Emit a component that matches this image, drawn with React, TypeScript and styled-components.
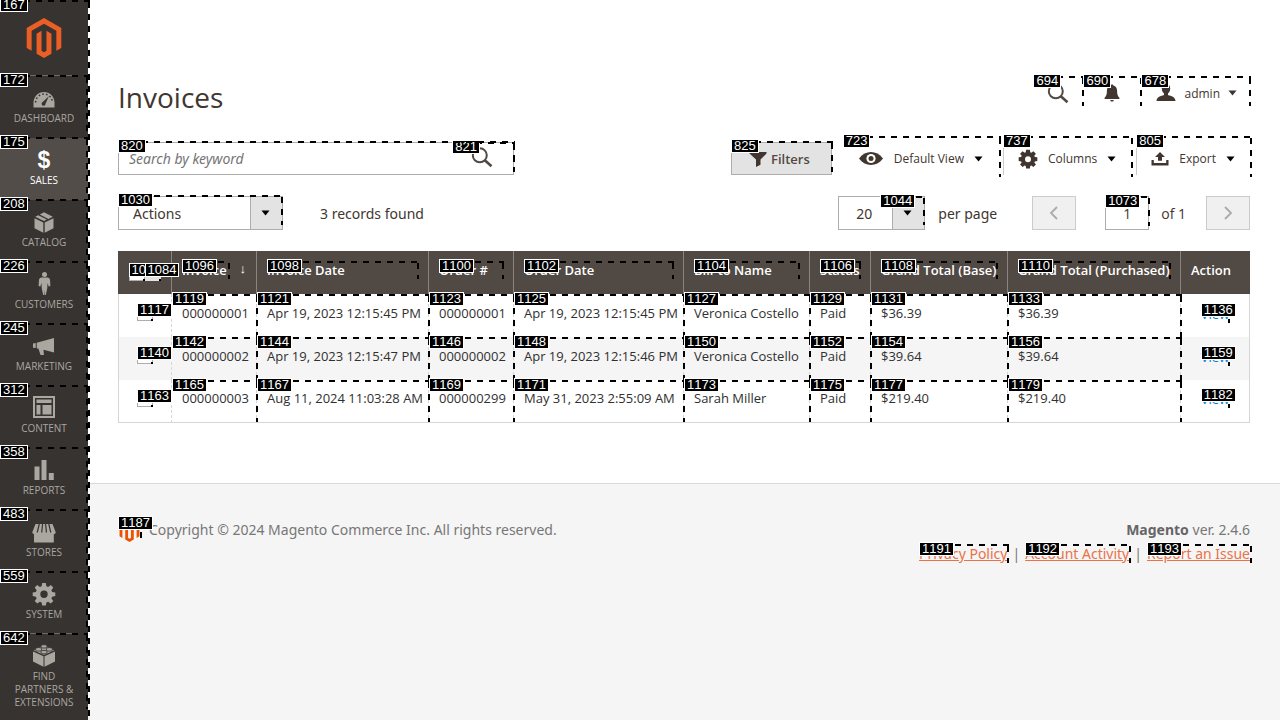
import React from 'react';
import styled, { createGlobalStyle, css } from 'styled-components';

const GlobalStyle = createGlobalStyle`
  *, *::before, *::after { box-sizing: border-box; }
  body {
    margin: 0;
    background: #fff;
    color: #41362f;
    font-family: 'Open Sans', 'Liberation Sans', sans-serif;
    font-size: 14px;
  }
  button, input, select { font: inherit; color: inherit; margin: 0; }
`;

const textFont = "'Noto Sans', 'Open Sans', sans-serif";

/* ---------- numbered element markers ---------- */

const MarkBox = styled.span<{ $t: number; $r: number; $b: number; $l: number }>`
  position: absolute;
  top: ${p => p.$t}px;
  right: ${p => p.$r}px;
  bottom: ${p => p.$b}px;
  left: ${p => p.$l}px;
  z-index: 2;
  pointer-events: none;
  background:
    repeating-linear-gradient(to right, #000 0 6px, transparent 6px 12px) top left / 100% 2px no-repeat,
    repeating-linear-gradient(to bottom, transparent 0 2px, #000 2px 8px, transparent 8px 12px) top right / 2px 100% no-repeat;
`;

const MarkTag = styled.span`
  position: absolute;
  top: -2px;
  left: 0;
  height: 14px;
  padding: 0 2px;
  border: 1px solid #fff;
  background: #000;
  color: #fff;
  font: normal 400 13px/12px 'Liberation Sans', Arial, sans-serif;
  font-kerning: none;
  text-transform: none;
  white-space: nowrap;
`;

type MarkProps = { id: number; t?: number; r?: number; b?: number; l?: number };

const Mark = ({ id, t = 0, r = 0, b = 0, l = 0 }: MarkProps) => (
  <MarkBox $t={t} $r={r} $b={b} $l={l} aria-hidden="true">
    <MarkTag>{id}</MarkTag>
  </MarkBox>
);

/* ---------- shell ---------- */

const Shell = styled.div`
  display: flex;
  min-height: 100vh;
`;

const Sidebar = styled.nav`
  position: relative;
  flex: 0 0 88px;
  background: #373330;
`;

const LogoLink = styled.a`
  display: flex;
  align-items: center;
  justify-content: center;
  height: 76px;
  color: #eb5f26;
`;

const MenuList = styled.ul`
  margin: 0;
  padding: 0;
  list-style: none;
`;

const MenuItem = styled.li<{ $active?: boolean; $ruled?: boolean }>`
  position: relative;
  background: ${p => (p.$active ? '#524d49' : 'transparent')};
  color: ${p => (p.$active ? '#fff' : '#aaa6a0')};
  ${p => p.$ruled && css`
    &::before {
      content: '';
      position: absolute;
      top: -1px;
      left: 16px;
      right: 16px;
      border-top: 1px solid #736963;
    }
  `}
`;

const MenuLink = styled.a`
  display: flex;
  flex-direction: column;
  align-items: center;
  gap: 2px;
  min-height: 62px;
  padding: 10px 8px 0;
  color: inherit;
  font-size: 10px;
  line-height: 13px;
  text-align: center;
  text-decoration: none;
  text-transform: uppercase;
`;

const DollarSign = styled.span`
  height: 24px;
  font: 700 23px/24px 'Liberation Sans', Arial, sans-serif;
`;

const Page = styled.div`
  display: flex;
  flex: 1;
  flex-direction: column;
  min-width: 0;
`;

const Main = styled.main`
  display: flex;
  flex-direction: column;
  gap: 21px;
  padding: 76px 30px 60px;
`;

const PageHeader = styled.header`
  display: flex;
  align-items: flex-start;
  justify-content: space-between;
`;

const Title = styled.h1`
  margin: 0;
  padding-bottom: 3px;
  font-size: 28px;
  font-weight: 400;
  line-height: 42px;
`;

const HeaderActions = styled.div`
  display: flex;
`;

const HeaderButton = styled.button`
  position: relative;
  display: flex;
  align-items: center;
  gap: 8px;
  height: 34px;
  padding: 0 14px;
  border: 0;
  background: none;
  font-size: 12px;
`;

const BellButton = styled(HeaderButton)`
  padding: 0 20px;
`;

const UserButton = styled(HeaderButton)`
  padding: 0 13px 0 15px;
`;

/* ---------- toolbar ---------- */

const Row = styled.div`
  display: flex;
  align-items: center;
  justify-content: space-between;
`;

const Group = styled.div`
  display: flex;
  align-items: center;
`;

const SearchBox = styled.form`
  position: relative;
  display: flex;
  flex: 0 0 35%;
  height: 33px;
  border: 1px solid #adadad;
`;

const SearchInput = styled.input`
  flex: 1;
  min-width: 0;
  padding: 0 10px;
  border: 0;
  background: none;
  &::placeholder { color: #757575; font-family: ${textFont}; font-style: italic; opacity: 1; }
`;

const SearchButton = styled.button`
  position: relative;
  width: 61px;
  padding: 0 0 0 19px;
  border: 0;
  background: none;
  text-align: left;
`;

const FiltersButton = styled.button`
  position: relative;
  display: flex;
  align-items: center;
  gap: 4px;
  height: 33px;
  margin-right: 11px;
  padding: 0 21px 0 17px;
  border: 1px solid #adadad;
  background: #e3e3e3;
  color: #514943;
  font-size: 13px;
  font-weight: 600;
`;

const ToolButton = styled.button<{ $divided?: boolean }>`
  position: relative;
  display: flex;
  align-items: center;
  gap: 10px;
  height: 33px;
  padding: 0 20px 0 14px;
  border: 0;
  border-left: 1px solid ${p => (p.$divided ? '#ccc' : 'transparent')};
  background: none;
  font-size: 12px;
  &:last-child { padding-right: 15px; }
`;

const SelectBox = styled.div<{ $width: number }>`
  position: relative;
  display: flex;
  width: ${p => p.$width}px;
  height: 34px;
  border: 1px solid #adadad;
`;

const Select = styled.select<{ $pad: number }>`
  flex: 1;
  width: 100%;
  padding: 0 32px 0 ${p => p.$pad}px;
  border: 0;
  border-radius: 0;
  background: linear-gradient(to right, #adadad 1px, #e3e3e3 1px) right / 32px 100% no-repeat;
  font-family: ${textFont};
  appearance: none;
`;

const SelectCaret = styled.span`
  position: absolute;
  top: 0;
  right: 12px;
  bottom: 0;
  display: flex;
  align-items: center;
  pointer-events: none;
`;

const RecordCount = styled.p`
  margin: 0 0 0 37px;
  font-family: ${textFont};
`;

const PerPage = styled.label`
  margin: 0 35px 0 13px;
  font-family: ${textFont};
`;

const PageButton = styled.button`
  display: flex;
  align-items: center;
  justify-content: center;
  width: 44px;
  height: 34px;
  padding: 0;
  border: 1px solid #ccc;
  background: #f0f0f0;
  color: #aaa;
`;

const PageField = styled.div`
  position: relative;
  margin: 0 12px 0 29px;
`;

const PageInput = styled.input`
  display: block;
  width: 44px;
  height: 34px;
  padding: 0;
  border: 1px solid #adadad;
  text-align: center;
`;

const PageTotal = styled.label`
  margin-right: 20px;
`;

/* ---------- grid ---------- */

const Grid = styled.table`
  width: 100%;
  border-collapse: separate;
  border-spacing: 0;
  table-layout: fixed;
  font-size: 13px;
  line-height: 18px;
`;

const HeadCell = styled.th`
  height: 43px;
  padding: 0 10px 5px;
  border-right: 1px solid #8a837f;
  background: #514943;
  color: #fff;
  font-weight: 600;
  text-align: left;
  white-space: nowrap;
  &:last-child { border-right-color: #514943; }
`;

const HeadInner = styled.div`
  display: flex;
  justify-content: space-between;
`;

const HeadLabel = styled.span`
  position: relative;
  flex: 1;
`;

const SortArrow = styled.span`
  width: 17px;
  font-weight: 400;
  line-height: 14px;
  text-align: right;
`;

const BodyRow = styled.tr`
  &:nth-child(even) { background: #f5f5f5; }
  &:last-child td { border-bottom: 1px solid #d6d6d6; }
`;

const Cell = styled.td`
  position: relative;
  height: 43px;
  padding: 0 10px 6px;
  border-right: 1px dashed #d6d6d6;
  color: #303030;
  white-space: nowrap;
  &:first-child { border-left: 1px solid #d6d6d6; }
  &:last-child { border-right: 1px solid #d6d6d6; }
`;

const CheckCell = styled(Cell)`
  padding: 0 0 5px;
`;

const ActionCell = styled(Cell)`
  padding: 0 10px 4px;
  text-align: center;
`;

const ViewLink = styled.a`
  position: relative;
  color: #007bdb;
  display: inline-block;
  text-decoration: none;
`;

const CheckWrap = styled.label`
  position: relative;
  display: block;
  width: 16px;
  height: 16px;
  margin: 0 auto;
`;

const Checkbox = styled.input`
  display: block;
  width: 16px;
  height: 16px;
  margin: 0;
  border: 1px solid #adadad;
  background: #fff;
  appearance: none;
`;

const MultiCheck = styled.div`
  display: flex;
  justify-content: center;
  margin-top: 5px;
`;

const MultiToggle = styled.button`
  position: relative;
  width: 16px;
  height: 16px;
  padding: 0;
  border: 0;
  background: #e3e3e3;
`;

const MultiLabel = styled.label`
  position: relative;
  width: 16px;
  height: 16px;
`;

/* ---------- footer ---------- */

const Footer = styled.footer`
  display: flex;
  flex: 1;
  align-items: flex-start;
  justify-content: space-between;
  padding: 34px 30px 0;
  border-top: 1px solid #d9d9d9;
  background: #f5f5f5;
  color: #777;
  font-family: ${textFont};
  line-height: 24px;
`;

const Copyright = styled.p`
  display: flex;
  gap: 7px;
  margin: 0;
`;

const FooterLogo = styled.a`
  position: relative;
  display: flex;
  align-items: center;
  justify-content: flex-start;
  width: 24px;
  height: 24px;
  color: #eb5202;
`;

const FooterInfo = styled.div`
  text-align: right;
`;

const Version = styled.p`
  margin: 0;
  strong { color: #666; font-weight: 700; }
`;

const FooterLink = styled.a`
  position: relative;
  color: #ea7248;
`;

const Divider = styled.span`
  margin: 0 5px;
`;

/* ---------- icons ---------- */

const MagentoLogo = ({ size }: { size: number }) => (
  <svg width={size} height={size} viewBox="0 0 24 24" fill="currentColor" aria-hidden="true">
    <path d="M12 24l-4.455-2.572v-12l2.97-1.715v12.001l1.485.902 1.485-.902V7.713l2.971 1.715v12L12 24zM22.391 6v12l-2.969 1.714V7.713L12 3.43 4.574 7.713v12.001L1.609 18V6L12 0l10.391 6z" />
  </svg>
);

const MenuSvg = ({ children }: { children: React.ReactNode }) => (
  <svg width="24" height="24" viewBox="0 0 24 24" fill="currentColor" aria-hidden="true">{children}</svg>
);

const dark = '#373330';

const menuIcons: Record<string, React.ReactNode> = {
  dashboard: (
    <MenuSvg>
      <path d="M1.5 21.5v-5C1.5 10.700 6.200 6 12 6s10.500 4.700 10.500 10.500v5z" />
      <path d="M16.800 10.300l-3.200 7.200a2 2 0 1 1-2.600-1.700z" fill={dark} />
      <path d="M3.600 16.500a8.400 8.400 0 0 1 16.800 0" fill="none" stroke={dark} strokeWidth="1.500" strokeDasharray="1.600 2.180" />
    </MenuSvg>
  ),
  catalog: (
    <MenuSvg>
      <path d="M2.500 8.200l8.800 4.300v10.200l-8.800-4.500zM21.500 8.200l-8.800 4.300v10.200l8.800-4.500zM3.200 6.800l3-1.500 8.600 4.300-2.800 1.400zM7.800 4.500L12 2.300l8.800 4.500-4.400 2.100z" />
    </MenuSvg>
  ),
  customers: (
    <MenuSvg>
      <circle cx="12.500" cy="2.500" r="2.500" />
      <path d="M9.500 5.500h6c1.300 0 2.300 1 2.500 2.300l.4 6-1.600.9-1.200-3.600-.4 5.400-1.400 6.500h-1l-.3-5.300-.3 5.300h-1l-1.400-6.500-.4-5.400-1.200 3.600-1.600-.9.4-6C7.200 6.500 8.200 5.500 9.500 5.500z" />
    </MenuSvg>
  ),
  marketing: (
    <MenuSvg>
      <path d="M1 9.500l2.700-.4v5L1 13.700zM4.700 8.700L22 4v14.500l-10.500-2.800.4 5.300H8.500l-2-6.300-1.800-.4z" />
    </MenuSvg>
  ),
  content: (
    <MenuSvg>
      <path d="M1 0h22v22H1zM3 2v18h18V2z" fillRule="evenodd" />
      <path d="M4.500 3.500h15V7h-15zM4.500 9h4v9.500h-4zM10.500 9h9v9.500h-9z" />
    </MenuSvg>
  ),
  reports: (
    <MenuSvg><path d="M2.500 8.500h5v13.500h-5zM9.500 2h5v20h-5zM16.800 15h5v7h-5z" /></MenuSvg>
  ),
  stores: (
    <MenuSvg>
      <path d="M3.500 4h17l3.300 8.500a2.700 2.700 0 0 1-2 1.700V22.500H2v-8.300a2.700 2.700 0 0 1-1.800-1.700z" />
      <path d="M7.300 4L5.200 12.500M10.600 4l-.9 8.500M13.600 4l.8 8.500M16.800 4l2 8.500" fill="none" stroke={dark} strokeWidth="1.200" />
    </MenuSvg>
  ),
  system: (
    <MenuSvg>
      <path fillRule="evenodd" d="M10.200 1h3.600l.6 3.200 1.700.7 2.700-1.900 2.500 2.500-1.900 2.700.7 1.700 3.200.6v3.600l-3.200.6-.7 1.700 1.900 2.700-2.500 2.500-2.700-1.900-1.700.7-.6 3.200h-3.600l-.6-3.200-1.700-.7-2.700 1.900-2.500-2.500 1.900-2.700-.7-1.700-3.200-.6v-3.600l3.200-.6.7-1.700-1.900-2.700 2.500-2.500 2.700 1.900 1.700-.7zM12 8.600a3.700 3.700 0 1 0 0 7.400 3.700 3.700 0 0 0 0-7.400z" />
    </MenuSvg>
  ),
  partners: (
    <MenuSvg>
      <path d="M1 7.500l10.500 4.700v10.500L1 17.600zM23 7.500l-10.500 4.700v10.500L23 17.600zM1.800 6.300L12 1.800l10.200 4.500L12 11z" />
      <g fill="currentColor" stroke={dark} strokeWidth="0.900">
        <path d="M9 3v-1.200c0-1.400 6-1.400 6 0V3c0 1.400-6 1.400-6 0zM3.600 6V4.700c0-1.400 6-1.400 6 0V6c0 1.400-6 1.400-6 0zM14.400 6V4.700c0-1.400 6-1.400 6 0V6c0 1.400-6 1.400-6 0zM9 8.800V7.500c0-1.400 6-1.400 6 0v1.300c0 1.400-6 1.400-6 0z" />
      </g>
    </MenuSvg>
  ),
};

const Caret = () => (
  <svg width="9" height="6" viewBox="0 0 9 6" fill="currentColor" aria-hidden="true"><path d="M0.500 0.500h8L4.500 5.500z" /></svg>
);

const BlackCaret = styled.span`
  display: flex;
  color: #000;
`;

const SearchIcon = () => (
  <svg width="22" height="22" viewBox="0 0 22 22" fill="none" stroke="#514943" aria-hidden="true">
    <circle cx="8.800" cy="9.300" r="7" strokeWidth="2" />
    <path d="M13.800 14.300l6.700 6" strokeWidth="2.600" />
  </svg>
);

const BellIcon = () => (
  <svg width="18" height="20" viewBox="0 0 18 20" fill="#41362f" aria-hidden="true">
    <path d="M9 1.500c.8 0 1.300.5 1.400 1.100 2.600.7 3.700 2.800 3.700 5.400 0 3.400.6 5.300 2.300 6.800v1.200H1.600v-1.200C3.300 13.300 3.900 11.400 3.900 8c0-2.600 1.100-4.700 3.700-5.400.1-.6.600-1.100 1.400-1.100zM7.200 17h3.600c-.2 1-.9 1.500-1.800 1.500S7.400 18 7.200 17z" />
  </svg>
);

const UserIcon = () => (
  <svg width="20" height="20" viewBox="0 0 20 20" fill="#41362f" aria-hidden="true">
    <path d="M10 1c3 0 4.300 2 4.200 4.400 0 2-.9 4-2.200 5v1.700c3.300 1 7.200 2 7.500 5.900H.5c.3-3.900 4.200-4.900 7.500-5.900v-1.700c-1.300-1-2.200-3-2.200-5C5.700 3 7 1 10 1z" />
  </svg>
);

const FunnelIcon = () => (
  <svg width="18" height="18" viewBox="0 0 18 18" fill="#41362f" aria-hidden="true"><path d="M.5 2h17v1.500l-6 6v5.300L7 17V9.500l-6.500-6z" /></svg>
);

const EyeIcon = () => (
  <svg width="26" height="16" viewBox="0 0 26 16" aria-hidden="true">
    <path d="M1 7.500C4.500 3 8.500 1 13 1s8.500 2 12 6.500C21.500 12 17.500 14 13 14S4.500 12 1 7.500z" fill="#41362f" />
    <circle cx="13" cy="7.500" r="4.600" fill="#fff" />
    <circle cx="13" cy="7.500" r="2.500" fill="#41362f" />
  </svg>
);

const GearIcon = () => (
  <svg width="20" height="20" viewBox="0 0 24 24" fill="#41362f" aria-hidden="true">
    <path fillRule="evenodd" d="M9.700 1h4.600l.4 3 1.300.6 2.500-1.900 3 3-1.900 2.500.6 1.300 3 .4v4.600l-3 .4-.6 1.300 1.900 2.500-3 3-2.500-1.900-1.300.6-.4 3H9.700l-.4-3-1.300-.6-2.500 1.900-3-3 1.900-2.500-.6-1.300-3-.4V9.900l3-.4.600-1.300-1.900-2.500 3-3L8 4.600 9.300 4zM12 8.600a3.600 3.600 0 1 0 0 7.200 3.600 3.600 0 0 0 0-7.200z" />
  </svg>
);

const ExportIcon = () => (
  <svg width="18" height="16" viewBox="0 0 18 16" fill="#41362f" aria-hidden="true">
    <path d="M.5 9h2.300v3h12.400V9h2.300v5.500H.5zM9 1l5 5h-3v3.800H7V6H4z" />
  </svg>
);

const Chevron = ({ flip }: { flip?: boolean }) => (
  <svg width="10" height="14" viewBox="0 0 10 14" fill="none" stroke="currentColor" strokeWidth="1.800" aria-hidden="true">
    <path d={flip ? 'M2 1l6 6-6 6' : 'M8 1L2 7l6 6'} />
  </svg>
);

/* ---------- data ---------- */

const menu = [
  { id: 172, icon: 'dashboard', label: 'Dashboard' },
  { id: 175, icon: 'sales', label: 'Sales' },
  { id: 208, icon: 'catalog', label: 'Catalog' },
  { id: 226, icon: 'customers', label: 'Customers' },
  { id: 245, icon: 'marketing', label: 'Marketing' },
  { id: 312, icon: 'content', label: 'Content' },
  { id: 358, icon: 'reports', label: 'Reports' },
  { id: 483, icon: 'stores', label: 'Stores' },
  { id: 559, icon: 'system', label: 'System' },
  { id: 642, icon: 'partners', label: 'Find Partners & Extensions' },
];

const columnWidths = [54, 85, 172, 85, 170, 126, 61, 137, 173, 69];

const headings = [
  { id: 1096, label: 'Invoice', sorted: true },
  { id: 1098, label: 'Invoice Date' },
  { id: 1100, label: 'Order #' },
  { id: 1102, label: 'Order Date' },
  { id: 1104, label: 'Bill-to Name' },
  { id: 1106, label: 'Status' },
  { id: 1108, label: 'Grand Total (Base)' },
  { id: 1110, label: 'Grand Total (Purchased)' },
];

const invoices = [
  { check: 1117, first: 1119, view: 1136, cells: ['000000001', 'Apr 19, 2023 12:15:45 PM', '000000001', 'Apr 19, 2023 12:15:45 PM', 'Veronica Costello', 'Paid', '$36.39', '$36.39'] },
  { check: 1140, first: 1142, view: 1159, cells: ['000000002', 'Apr 19, 2023 12:15:47 PM', '000000002', 'Apr 19, 2023 12:15:46 PM', 'Veronica Costello', 'Paid', '$39.64', '$39.64'] },
  { check: 1163, first: 1165, view: 1182, cells: ['000000003', 'Aug 11, 2024 11:03:28 AM', '000000299', 'May 31, 2023 2:55:09 AM', 'Sarah Miller', 'Paid', '$219.40', '$219.40'] },
];

export default function App() {
  return (
    <>
      <GlobalStyle />
      <Shell>
        <Sidebar aria-label="Main menu">
          <LogoLink href="#" aria-label="Magento admin"><MagentoLogo size={40} /></LogoLink>
          <MenuList>
            {menu.map(item => (
              <MenuItem
                key={item.id}
                $active={item.icon === 'sales'}
                $ruled={item.icon === 'dashboard' || item.icon === 'partners'}
              >
                <MenuLink href="#">
                  {item.icon === 'sales' ? <DollarSign aria-hidden="true">$</DollarSign> : menuIcons[item.icon]}
                  <span>{item.label}</span>
                </MenuLink>
                <Mark id={item.id} t={-1} />
              </MenuItem>
            ))}
          </MenuList>
          <Mark id={167} r={-2} />
        </Sidebar>

        <Page>
          <Main>
            <PageHeader>
              <Title>Invoices</Title>
              <HeaderActions>
                <HeaderButton type="button" aria-label="Search">
                  <SearchIcon />
                  <Mark id={694} r={-1} b={4} />
                </HeaderButton>
                <BellButton type="button" aria-label="Notifications">
                  <BellIcon />
                  <Mark id={690} r={-1} b={4} />
                </BellButton>
                <UserButton type="button">
                  <UserIcon />admin<Caret />
                  <Mark id={678} r={-1} b={4} />
                </UserButton>
              </HeaderActions>
            </PageHeader>

            <Row>
              <SearchBox role="search">
                <SearchInput type="text" placeholder="Search by keyword" aria-label="Search by keyword" />
                <SearchButton type="button" aria-label="Search">
                  <SearchIcon />
                  <Mark id={821} t={-1} r={-2} b={2} />
                </SearchButton>
                <Mark id={820} t={-2} r={-2} b={2} l={-1} />
              </SearchBox>
              <Group>
                <FiltersButton type="button">
                  <FunnelIcon />Filters
                  <Mark id={825} t={-2} r={-2} b={2} l={-1} />
                </FiltersButton>
                <ToolButton type="button">
                  <EyeIcon />Default View<BlackCaret><Caret /></BlackCaret>
                  <Mark id={723} t={-6} r={2} b={-2} l={-1} />
                </ToolButton>
                <ToolButton type="button" $divided>
                  <GearIcon />Columns<BlackCaret><Caret /></BlackCaret>
                  <Mark id={737} t={-6} r={3} b={-2} l={-1} />
                </ToolButton>
                <ToolButton type="button" $divided>
                  <ExportIcon />Export<BlackCaret><Caret /></BlackCaret>
                  <Mark id={805} t={-6} r={-2} b={-2} l={-1} />
                </ToolButton>
              </Group>
            </Row>

            <Row>
              <Group>
                <SelectBox $width={165}>
                  <Select $pad={14} aria-label="Actions" defaultValue="Actions"><option>Actions</option></Select>
                  <SelectCaret><BlackCaret><Caret /></BlackCaret></SelectCaret>
                  <Mark id={1030} t={-2} r={-1} b={4} l={-1} />
                </SelectBox>
                <RecordCount>3 records found</RecordCount>
              </Group>
              <Group>
                <SelectBox $width={87}>
                  <Select id="page-size" $pad={17} defaultValue="20"><option>20</option></Select>
                  <SelectCaret><BlackCaret><Caret /></BlackCaret></SelectCaret>
                  <Mark id={1044} t={-1} r={-1} b={4} l={41} />
                </SelectBox>
                <PerPage htmlFor="page-size">per page</PerPage>
                <PageButton type="button" aria-label="Previous page"><Chevron /></PageButton>
                <PageField>
                  <PageInput id="page-number" type="text" defaultValue="1" />
                  <Mark id={1073} r={-1} b={4} />
                </PageField>
                <PageTotal htmlFor="page-number">of 1</PageTotal>
                <PageButton type="button" aria-label="Next page"><Chevron flip /></PageButton>
              </Group>
            </Row>

            <Grid>
              <colgroup>
                {columnWidths.map((width, i) => <col key={i} width={width} />)}
              </colgroup>
              <thead>
                <tr>
                  <HeadCell scope="col">
                    <MultiCheck>
                      <MultiLabel>
                        <Checkbox type="checkbox" aria-label="Select all invoices" />
                        <Mark id={1083} />
                      </MultiLabel>
                      <MultiToggle type="button" aria-label="Selection options">
                        <Mark id={1084} />
                      </MultiToggle>
                    </MultiCheck>
                  </HeadCell>
                  {headings.map(heading => (
                    <HeadCell key={heading.id} scope="col">
                      <HeadInner>
                        <HeadLabel>
                          {heading.label}
                          <Mark id={heading.id} r={-1} />
                        </HeadLabel>
                        {heading.sorted && <SortArrow>↓</SortArrow>}
                      </HeadInner>
                    </HeadCell>
                  ))}
                  <HeadCell scope="col">Action</HeadCell>
                </tr>
              </thead>
              <tbody>
                {invoices.map(invoice => (
                  <BodyRow key={invoice.first}>
                    <CheckCell>
                      <CheckWrap>
                        <Checkbox type="checkbox" aria-label={`Select invoice ${invoice.cells[0]}`} />
                        <Mark id={invoice.check} />
                      </CheckWrap>
                    </CheckCell>
                    {invoice.cells.map((text, i) => (
                      <Cell key={i}>
                        {text}
                        <Mark id={invoice.first + i * 2} r={-2} />
                      </Cell>
                    ))}
                    <ActionCell>
                      <ViewLink href="#">View<Mark id={invoice.view} r={-1} /></ViewLink>
                    </ActionCell>
                  </BodyRow>
                ))}
              </tbody>
            </Grid>
          </Main>

          <Footer>
            <Copyright>
              <FooterLogo href="#" aria-label="Magento"><MagentoLogo size={23} /><Mark id={1187} /></FooterLogo>
              Copyright © 2024 Magento Commerce Inc. All rights reserved.
            </Copyright>
            <FooterInfo>
              <Version><strong>Magento</strong> ver. 2.4.6</Version>
              <div>
                <FooterLink href="#">Privacy Policy<Mark id={1191} r={-2} /></FooterLink>
                <Divider>|</Divider>
                <FooterLink href="#">Account Activity<Mark id={1192} r={-2} /></FooterLink>
                <Divider>|</Divider>
                <FooterLink href="#">Report an Issue<Mark id={1193} r={-2} /></FooterLink>
              </div>
            </FooterInfo>
          </Footer>
        </Page>
      </Shell>
    </>
  );
}
